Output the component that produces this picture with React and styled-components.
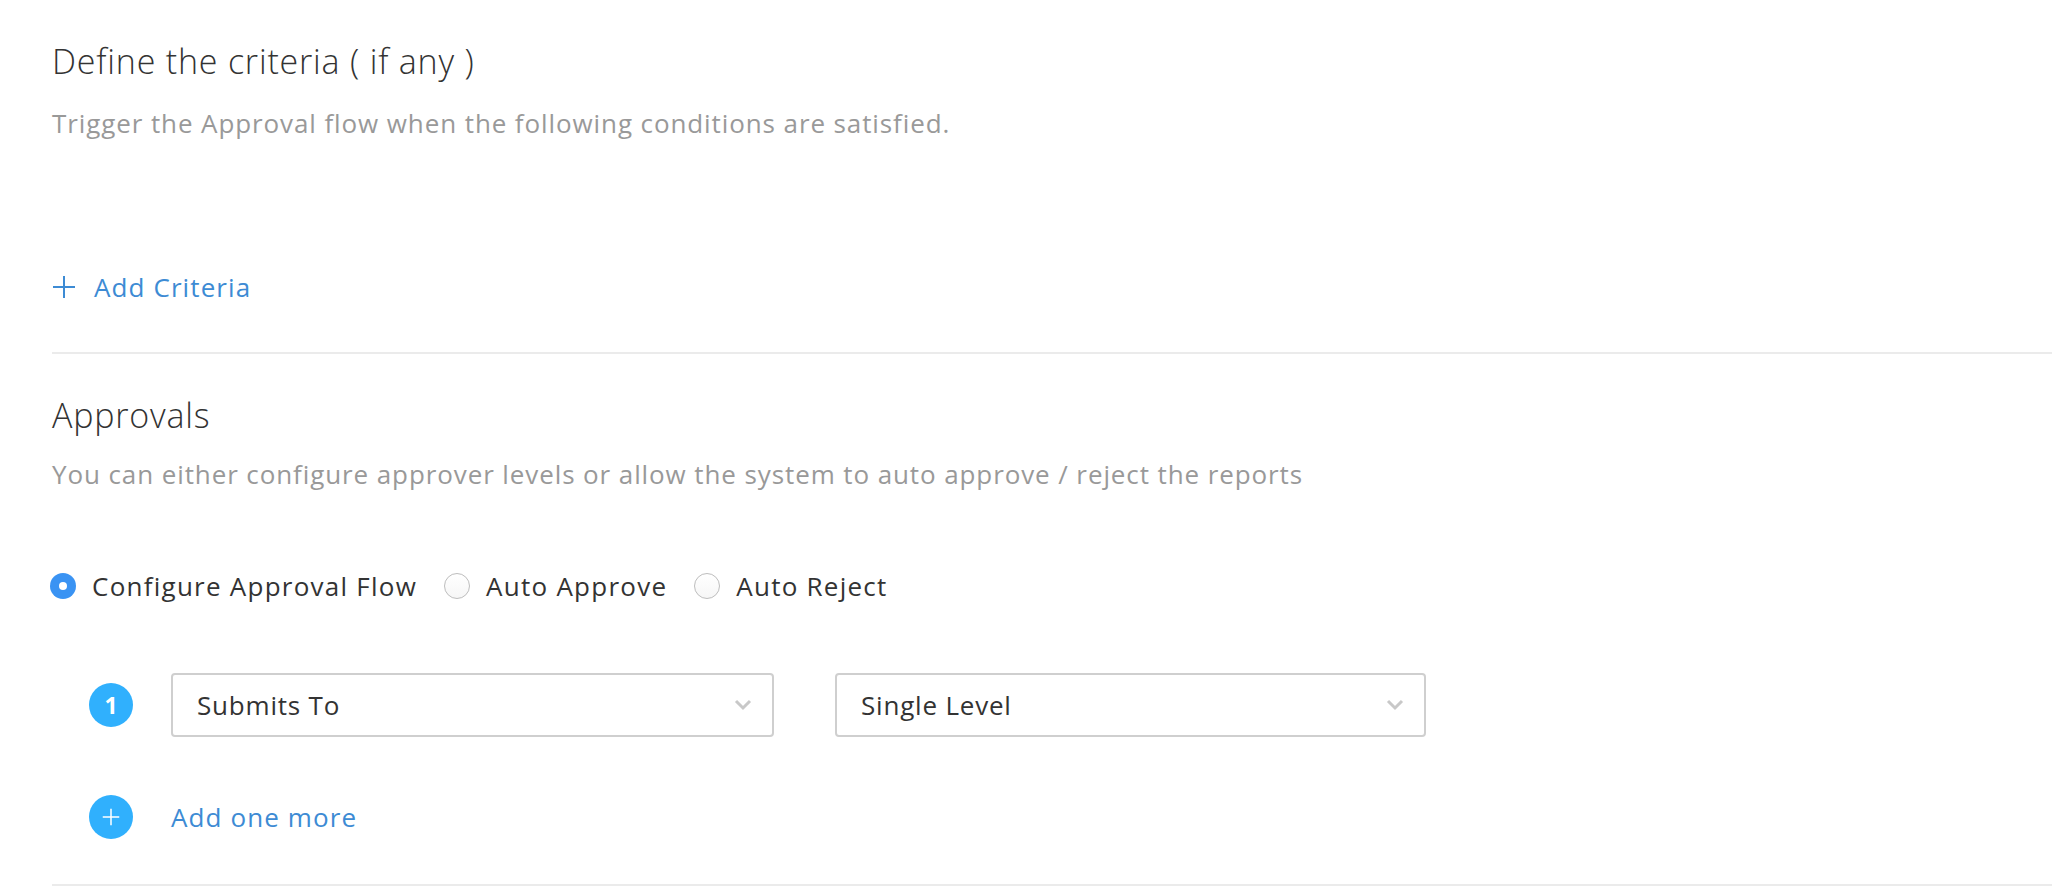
import React, { useState } from 'react';
import styled, { createGlobalStyle } from 'styled-components';

const GlobalStyle = createGlobalStyle`
    body {
        margin: 0;
        background: #fff;
        font-family: "Open Sans", Lato, sans-serif;
        color: #333;
    }
`

const Page = styled.div`
    padding-left: 52px;
    width: 2000px;
`

const Section = styled.section`
    display: flex;
    flex-direction: column;
    align-items: flex-start;
    padding-top: ${props => props.top}px;
    padding-bottom: ${props => props.bottom}px;
    border-bottom: 2px solid #ebebeb;
`

const Title = styled.h2`
    margin: 0;
    font-size: 34px;
    line-height: 40px;
    font-weight: 300;
    letter-spacing: 0.8px;
    color: #333;
`

const Hint = styled.p`
    margin: ${props => props.gap}px 0 0;
    font-size: 26px;
    line-height: 32px;
    letter-spacing: 0.9px;
    color: #999;
`

const Link = styled.a`
    display: flex;
    align-items: center;
    gap: ${props => props.gap}px;
    margin-top: ${props => props.top}px;
    font-size: 26px;
    line-height: 32px;
    letter-spacing: 1.1px;
    color: #3d8bd4;
    text-decoration: none;
    cursor: pointer;
`

const RadioRow = styled.div`
    display: flex;
    align-items: center;
    margin: 80px 0 0 -2px;
    gap: 27px;
`

const RadioLabel = styled.label`
    display: flex;
    align-items: center;
    gap: 16px;
    font-size: 26px;
    line-height: 32px;
    letter-spacing: 1.25px;
    color: #333;
    cursor: pointer;
`

const RadioDot = styled.span`
    width: 26px;
    height: 26px;
    border-radius: 50%;
    box-sizing: border-box;
    display: flex;
    align-items: center;
    justify-content: center;
    background: ${props => props.checked ? '#3a93f3' : 'linear-gradient(#fff, #f6f6f6)'};
    border: ${props => props.checked ? 'none' : '1.5px solid #bdbdbd'};
    &::after {
        content: '';
        width: 8px;
        height: 8px;
        border-radius: 50%;
        background: #fff;
        display: ${props => props.checked ? 'block' : 'none'};
    }
`

const LevelRow = styled.div`
    display: flex;
    align-items: center;
    margin: 71px 0 0 37px;
`

const Badge = styled.span`
    width: 44px;
    height: 44px;
    border-radius: 50%;
    background: #30b0fd;
    color: #fff;
    display: flex;
    align-items: center;
    justify-content: center;
    font-size: 23px;
    font-weight: 700;
    flex-shrink: 0;
    margin-right: 38px;
`

const Select = styled.div`
    width: ${props => props.width}px;
    height: 64px;
    box-sizing: border-box;
    border: 2px solid #cfcfcf;
    border-radius: 4px;
    display: flex;
    align-items: center;
    justify-content: space-between;
    padding: 0 20px 0 24px;
    margin-right: ${props => props.gap || 0}px;
    font-size: 26px;
    letter-spacing: 0.8px;
    color: #333;
`

const AddRow = styled.div`
    display: flex;
    align-items: center;
    margin: 58px 0 0 37px;
`

const Chevron = () => (
    <svg width="18" height="12" viewBox="0 0 18 12">
        <path d="M2 2 L9 9 L16 2" fill="none" stroke="#c8c8c8" strokeWidth="3" />
    </svg>
)

const Plus = ({ color, size }) => (
    <svg width={size} height={size} viewBox="0 0 24 24">
        <path d="M12 1 V23 M1 12 H23" stroke={color} strokeWidth="2" />
    </svg>
)

const options = ['Configure Approval Flow', 'Auto Approve', 'Auto Reject'];

const App = () => {
    const [ mode, setMode ] = useState(0);

    return (
        <Page>
            <GlobalStyle />
            <Section top={41} bottom={49}>
                <Title>Define the criteria ( if any )</Title>
                <Hint gap={26}>Trigger the Approval flow when the following conditions are satisfied.</Hint>
                <Link top={132} gap={18}>
                    <Plus color="#3d8bd4" size={24} /> Add Criteria
                </Link>
            </Section>
            <Section top={41} bottom={45}>
                <Title>Approvals</Title>
                <Hint gap={23}>You can either configure approver levels or allow the system to auto approve / reject the reports</Hint>
                <RadioRow>
                    {options.map((o, i) => (
                        <RadioLabel key={o} onClick={() => setMode(i)}>
                            <RadioDot checked={mode === i} /> {o}
                        </RadioLabel>
                    ))}
                </RadioRow>
                <LevelRow>
                    <Badge>1</Badge>
                    <Select width={603} gap={61}>Submits To <Chevron /></Select>
                    <Select width={591}>Single Level <Chevron /></Select>
                </LevelRow>
                <AddRow>
                    <Badge>
                        <Plus color="#fff" size={18} />
                    </Badge>
                    <Link top={0}>Add one more</Link>
                </AddRow>
            </Section>
        </Page>
    );
};

export default App;
